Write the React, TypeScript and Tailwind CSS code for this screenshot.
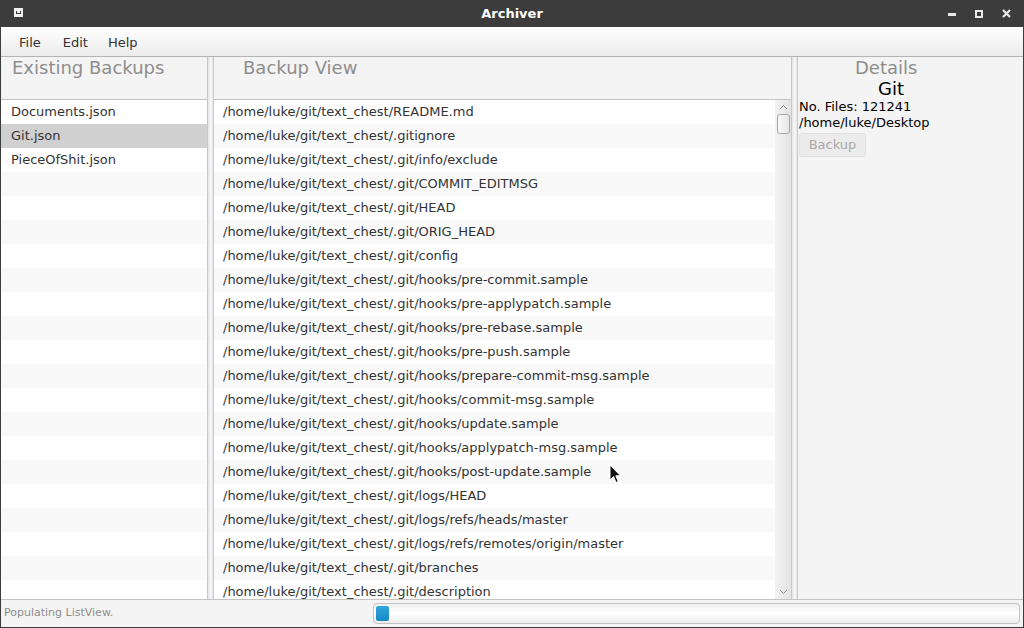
import React from 'react'

const backups = ['Documents.json', 'Git.json', 'PieceOfShit.json']

const files = [
  '/home/luke/git/text_chest/README.md',
  '/home/luke/git/text_chest/.gitignore',
  '/home/luke/git/text_chest/.git/info/exclude',
  '/home/luke/git/text_chest/.git/COMMIT_EDITMSG',
  '/home/luke/git/text_chest/.git/HEAD',
  '/home/luke/git/text_chest/.git/ORIG_HEAD',
  '/home/luke/git/text_chest/.git/config',
  '/home/luke/git/text_chest/.git/hooks/pre-commit.sample',
  '/home/luke/git/text_chest/.git/hooks/pre-applypatch.sample',
  '/home/luke/git/text_chest/.git/hooks/pre-rebase.sample',
  '/home/luke/git/text_chest/.git/hooks/pre-push.sample',
  '/home/luke/git/text_chest/.git/hooks/prepare-commit-msg.sample',
  '/home/luke/git/text_chest/.git/hooks/commit-msg.sample',
  '/home/luke/git/text_chest/.git/hooks/update.sample',
  '/home/luke/git/text_chest/.git/hooks/applypatch-msg.sample',
  '/home/luke/git/text_chest/.git/hooks/post-update.sample',
  '/home/luke/git/text_chest/.git/logs/HEAD',
  '/home/luke/git/text_chest/.git/logs/refs/heads/master',
  '/home/luke/git/text_chest/.git/logs/refs/remotes/origin/master',
  '/home/luke/git/text_chest/.git/branches',
  '/home/luke/git/text_chest/.git/description',
]

// empty rows filling the rest of the left list
const emptyRows = Array.from({ length: 18 })

const Divider: React.FC = () => (
  <div className="w-[7px] shrink-0 border-x border-[#c8c8c8] bg-gradient-to-r from-[#e4e4e4] via-[#f7f7f7] to-[#e8e8e8]" />
)

const App: React.FC = () => {
  return (
    <div
      className="relative flex h-[628px] w-[1024px] flex-col overflow-hidden border-x border-b border-[#3c3c3c] bg-[#f4f4f4] text-[13px] text-[#333]"
      style={{ fontFamily: '"DejaVu Sans", sans-serif' }}
    >
      {/* Title bar */}
      <div className="relative flex h-[27px] shrink-0 items-center justify-center bg-[#3c3c3c]">
        <div className="absolute left-[13px] top-[8px] flex h-[9px] w-[9px] items-center justify-center bg-[#f0f0f0]">
          <div className="h-[3px] w-[5px] border-x border-b border-[#3c3c3c]" />
        </div>
        <span className="text-[13px] font-bold text-white">Archiver</span>
        <div className="absolute right-[12px] top-0 flex h-[27px] items-center gap-[19px]">
          <div className="mt-[2px] h-[3px] w-[8px] bg-[#e8e8e8]" />
          <div className="h-[8px] w-[8px] border-[2px] border-[#e8e8e8]" />
          <svg width="9" height="9" viewBox="0 0 9 9">
            <path d="M1 1 L8 8 M8 1 L1 8" stroke="#e8e8e8" strokeWidth="2.2" />
          </svg>
        </div>
      </div>

      {/* Menu bar */}
      <div className="flex h-[30px] shrink-0 items-center gap-[20px] border-b border-[#b5b5b5] bg-gradient-to-b from-[#ffffff] to-[#ebebeb] pl-[18px] pt-[2px]">
        <span className="mr-[2px]">File</span>
        <span>Edit</span>
        <span>Help</span>
      </div>

      {/* Main split pane */}
      <div className="flex h-[542px] shrink-0">
        {/* Existing backups */}
        <div className="flex w-[206px] shrink-0 flex-col">
          <div className="h-[42px] shrink-0 pl-[11px] text-[18px] leading-[22px] text-[#8e8e8e]">
            Existing Backups
          </div>
          <div className="flex-1 overflow-hidden border-t border-[#c3c3c3] bg-white">
            {backups.map((name, i) => (
              <div
                key={name}
                className={`flex h-[24px] items-center pl-[10px] ${
                  i === 1 ? 'bg-[#d0d0d0]' : i % 2 ? 'bg-[#f9f9f9]' : 'bg-white'
                }`}
              >
                {name}
              </div>
            ))}
            {emptyRows.map((_, i) => (
              <div
                key={i}
                className={`h-[24px] ${(i + 3) % 2 ? 'bg-[#f9f9f9]' : 'bg-white'}`}
              />
            ))}
          </div>
        </div>

        <Divider />

        {/* Backup view */}
        <div className="flex w-[577px] shrink-0 flex-col">
          <div className="h-[42px] shrink-0 pl-[29px] text-[18px] leading-[22px] text-[#8e8e8e]">
            Backup View
          </div>
          <div className="flex min-h-0 flex-1 border-t border-[#c3c3c3] bg-white">
            <div className="flex-1 overflow-hidden">
              {files.map((f, i) => (
                <div
                  key={f}
                  className={`flex h-[24px] shrink-0 items-center pl-[9px] ${
                    i % 2 ? 'bg-[#f9f9f9]' : 'bg-white'
                  }`}
                >
                  {f}
                </div>
              ))}
            </div>
            {/* Scrollbar */}
            <div className="flex w-[16px] shrink-0 flex-col items-center bg-gradient-to-r from-[#f2f2f2] to-[#e4e4e4]">
              <svg width="9" height="12" viewBox="0 0 9 12" className="mt-[1px]">
                <path d="M1 8 L4.5 4.5 L8 8" fill="none" stroke="#8a8a8a" strokeWidth="1" />
              </svg>
              <div className="mt-[1px] h-[20px] w-[13px] rounded-[3px] border border-[#a6a6a6] bg-gradient-to-r from-[#fafafa] to-[#e6e6e6]" />
              <div className="flex-1" />
              <svg width="9" height="12" viewBox="0 0 9 12" className="mb-[1px]">
                <path d="M1 4 L4.5 7.5 L8 4" fill="none" stroke="#8a8a8a" strokeWidth="1" />
              </svg>
            </div>
          </div>
        </div>

        <Divider />

        {/* Details */}
        <div className="flex flex-1 flex-col pl-[1px]">
          <div className="pl-[56px] text-[18px] leading-[22px] text-[#8e8e8e]">Details</div>
          <div className="pl-[79px] text-[18px] leading-[20px] text-black">Git</div>
          <div className="leading-[16px] text-black">No. Files: 121241</div>
          <div className="leading-[16px] text-black">/home/luke/Desktop</div>
          <div className="mt-[2px] flex h-[24px] w-[67px] items-center justify-center rounded-[3px] border border-[#e0e0e0] bg-[#ececec] text-[#a8a8a8]">
            Backup
          </div>
        </div>
      </div>

      {/* Status bar */}
      <div className="flex flex-1 items-center border-t border-[#c3c3c3] bg-[#f4f4f4]">
        <span className="w-[372px] shrink-0 pl-[3px] text-[11px] text-[#8e8e8e]">Populating ListView.</span>
        <div className="mr-[3px] flex h-[21px] flex-1 items-center rounded-[4px] border border-[#c3c3c3] bg-gradient-to-b from-[#f0f0f0] via-[#ffffff] to-[#ececec] px-[2px]">
          <div className="h-[15px] w-[13px] rounded-[2px] bg-gradient-to-b from-[#2fa6dc] to-[#1689c4]" />
        </div>
      </div>

      {/* Mouse pointer */}
      <svg
        className="absolute left-[608px] top-[464px]"
        width="14"
        height="21"
        viewBox="0 0 14 21"
      >
        <path
          d="M1 1 L1 16 L4.5 12.5 L7 18.5 L9.3 17.5 L6.8 11.8 L11.5 11.8 Z"
          fill="#111"
          stroke="#fff"
          strokeWidth="1"
        />
      </svg>
    </div>
  )
}

export default App
